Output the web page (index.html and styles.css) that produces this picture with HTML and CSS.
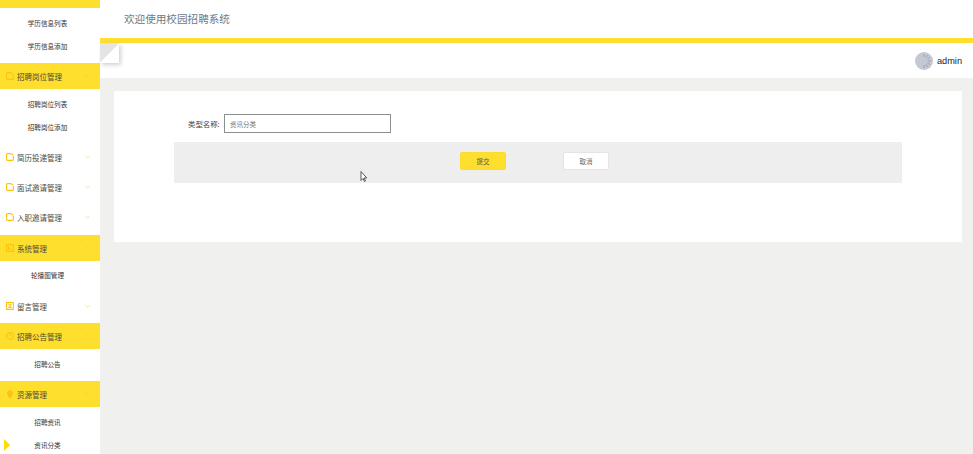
FILE: index.html
```html
<!DOCTYPE html>
<html lang="zh">
<head>
<meta charset="utf-8">
<title>校园招聘系统</title>
<link rel="stylesheet" href="styles.css">
</head>
<body>
<div class="app">
  <aside class="sidebar">
    <div class="top-strip"></div>
    <div class="sub-group first">
      <a class="sub">学历信息列表</a>
      <a class="sub">学历信息添加</a>
    </div>
    <div class="menu open">
      <svg class="ico" viewBox="0 0 8 8"><path d="M5 .6H1.400a.8.8 0 0 0-.8.8v5.200a.8.8 0 0 0 .8.8h5.200a.8.8 0 0 0 .8-.8V3"/><path d="M5.200 .6l2.200 1.600"/></svg>
      <span class="menu-text">招聘岗位管理</span>
      <svg class="chev" viewBox="0 0 6 4"><path d="M.5 3.300L3 1l2.500 2.300"/></svg>
    </div>
    <div class="sub-group gap-b3">
      <a class="sub">招聘岗位列表</a>
      <a class="sub">招聘岗位添加</a>
    </div>
    <div class="menu closed">
      <svg class="ico" viewBox="0 0 8 8"><path d="M5 .6H1.400a.8.8 0 0 0-.8.8v5.200a.8.8 0 0 0 .8.8h5.200a.8.8 0 0 0 .8-.8V3"/><path d="M5.200 .6l2.200 1.600"/></svg>
      <span class="menu-text">简历投递管理</span>
      <svg class="chev" viewBox="0 0 6 4"><path d="M.5 1L3 3.300 5.500 1"/></svg>
    </div>
    <div class="menu closed">
      <svg class="ico" viewBox="0 0 8 8"><path d="M5 .6H1.400a.8.8 0 0 0-.8.8v5.200a.8.8 0 0 0 .8.8h5.200a.8.8 0 0 0 .8-.8V3"/><path d="M5.200 .6l2.200 1.600"/></svg>
      <span class="menu-text">面试邀请管理</span>
      <svg class="chev" viewBox="0 0 6 4"><path d="M.5 1L3 3.300 5.500 1"/></svg>
    </div>
    <div class="menu closed">
      <svg class="ico" viewBox="0 0 8 8"><path d="M5 .6H1.400a.8.8 0 0 0-.8.8v5.200a.8.8 0 0 0 .8.8h5.200a.8.8 0 0 0 .8-.8V3"/><path d="M5.200 .6l2.200 1.600"/></svg>
      <span class="menu-text">入职邀请管理</span>
      <svg class="chev" viewBox="0 0 6 4"><path d="M.5 1L3 3.300 5.500 1"/></svg>
    </div>
    <div class="menu open after-closed">
      <svg class="ico" viewBox="0 0 8 8"><path d="M.6 .6h6.800v6.800H.6z"/><path d="M2.500 5.300h3M2.500 2v3.300"/></svg>
      <span class="menu-text">系统管理</span>
      <svg class="chev" viewBox="0 0 6 4"><path d="M.5 3.300L3 1l2.500 2.300"/></svg>
    </div>
    <div class="sub-group tight">
      <a class="sub">轮播图管理</a>
    </div>
    <div class="menu closed">
      <svg class="ico" viewBox="0 0 8 8"><path d="M.6 .6h6.800v6.800H.6z"/><path d="M2.200 2.800h3.600M4 2.800v2.600M2.200 5.400h3.600"/></svg>
      <span class="menu-text">留言管理</span>
      <svg class="chev" viewBox="0 0 6 4"><path d="M.5 1L3 3.300 5.500 1"/></svg>
    </div>
    <div class="menu open after-closed-2">
      <svg class="ico" viewBox="0 0 8 8"><circle cx="4" cy="4" r="3.400"/><path d="M4 2v2.400M4 5.200v.7"/></svg>
      <span class="menu-text">招聘公告管理</span>
      <svg class="chev" viewBox="0 0 6 4"><path d="M.5 3.300L3 1l2.500 2.300"/></svg>
    </div>
    <div class="sub-group notice">
      <a class="sub">招聘公告</a>
    </div>
    <div class="menu open">
      <svg class="ico solid" viewBox="0 0 8 8"><path d="M4 .3a3 3 0 0 1 1.800 5.400V7.800H2.200V5.700A3 3 0 0 1 4 .3z"/></svg>
      <span class="menu-text">资源管理</span>
      <svg class="chev" viewBox="0 0 6 4"><path d="M.5 3.300L3 1l2.500 2.300"/></svg>
    </div>
    <div class="sub-group">
      <a class="sub">招聘资讯</a>
      <a class="sub">资讯分类</a>
    </div>
    <div class="active-mark"></div>
  </aside>

  <div class="main">
    <header class="header">欢迎使用校园招聘系统</header>
    <div class="userbar">
      <div class="fold"></div>
      <div class="user">
        <svg class="avatar" viewBox="0 0 18 18">
          <circle cx="9" cy="9" r="9" fill="#c3c8d2"/>
          <g stroke="#8d93a0" stroke-width=".7">
            <path d="M9 2v3M12.500 3l-1.500 2.600M15 5.500l-2.600 1.500M16 9h-3M15 12.500l-2.600-1.500M12.500 15l-1.500-2.600M9 16v-3"/>
          </g>
        </svg>
        <span class="username">admin</span>
      </div>
    </div>
    <main class="content">
      <section class="card">
        <div class="form-row">
          <label class="form-label">类型名称:</label>
          <input class="form-input" type="text" value="资讯分类">
        </div>
        <div class="actions">
          <button class="btn primary">提交</button>
          <button class="btn plain">取消</button>
        </div>
      </section>
    </main>
  </div>

  <svg class="cursor" viewBox="0 0 8 12"><path d="M1 .5v9l2-2 1.500 3 1-.5-1.500-3h2.800z" fill="#fff" stroke="#333" stroke-width=".8"/></svg>
</div>
</body>
</html>
```
FILE: styles.css
```css
* { box-sizing: border-box; }
html, body { margin: 0; height: 100%; overflow: hidden; }
body { font-family: "Noto Sans CJK SC", "Liberation Sans", sans-serif; background: #f0f0ee; color: #333; }

.app { display: flex; width: 973px; height: 454px; overflow: hidden; position: relative; }

.sidebar { width: 100px; flex: none; background: #fff; position: relative; height: 454px; overflow: hidden; }
.top-strip { height: 8px; background: #ffdf2e; }

.sub-group { display: flex; flex-direction: column; padding: 4px 0; }
.sub-group.first { padding: 4px 0 5px; }
.sub-group.gap-b3 { padding: 4px 0 3px; }
.sub-group.tight { padding: 3px 0 4px; }
.sub-group.notice { padding: 3.500px 0 5.500px; }
.sub { height: 23px; line-height: 23px; text-align: center; font-size: 6.600px; color: #333; padding-right: 5px; }

.menu { display: flex; align-items: center; padding: 0 10px 0 6px; font-size: 7.500px; color: #4a4a3a; }
.menu.open { height: 26px; background: #ffdf2e; }
.menu.closed { height: 30px; background: #fff; }
.after-closed { margin-top: 3px; }
.after-closed-2 { margin-top: 2px; }
.menu-text { margin-left: 3px; flex: 1; }

.ico { width: 8px; height: 8px; fill: none; stroke: #fdc30c; stroke-width: 1.100; flex: none; }
.ico.solid { fill: #fdc30c; stroke: none; }
.chev { width: 5px; height: 4px; fill: none; stroke: #fdd145; stroke-width: .8; flex: none; }
.menu.open .chev { stroke: #fcc726; }

.active-mark { position: absolute; left: 4px; top: 439px; border-left: 6px solid #ffdd00; border-top: 6px solid transparent; border-bottom: 6px solid transparent; }

.main { flex: 1; min-width: 0; display: flex; flex-direction: column; }
.header { height: 43px; background: #fff; border-bottom: 5px solid #ffdf2e; padding: 0 24px; font-size: 10.600px; line-height: 38px; color: #6d7a88; }

.userbar { height: 35px; background: #fff; position: relative; display: flex; justify-content: flex-end; align-items: center; padding: 0 11px 0 0; }
.fold { position: absolute; left: 0; top: 0; width: 19px; height: 20px; background: linear-gradient(135deg, #e4e4e4 50%, #ffffff 50%); box-shadow: 2px 2px 4px rgba(0, 0, 0, .18); }
.user { display: flex; align-items: center; gap: 4px; margin-top: 1px; }
.avatar { width: 18px; height: 18px; display: block; }
.username { font-family: "Liberation Sans", sans-serif; font-size: 9.200px; color: #223; }

.content { flex: 1; padding: 13px 11px 0 14px; background: #f0f0ee; }
.card { background: #fff; height: 151px; padding: 23px 60px 0; }

.form-row { display: flex; align-items: center; height: 19px; padding-left: 14px; }
.form-label { font-size: 7.400px; color: #444; width: 36px; flex: none; }
.form-input { width: 167px; height: 19px; border: 1px solid #8a9090; background: #fff; padding: 0 5px; font-family: inherit; font-size: 6.500px; color: #777; outline: none; }

.actions { margin-top: 9px; height: 41px; background: #eeeeee; display: flex; align-items: flex-start; padding: 10px 0 0 286px; gap: 57px; }
.btn { width: 46px; height: 18px; border-radius: 2px; font-family: inherit; font-size: 6.500px; padding: 0; border: 1px solid #e4e4e4; }
.btn.primary { background: #ffdf2e; border-color: #f9dc30; color: #555; }
.btn.plain { background: #fff; color: #666; }

.cursor { position: absolute; left: 360px; top: 171px; width: 8px; height: 12px; }
```
